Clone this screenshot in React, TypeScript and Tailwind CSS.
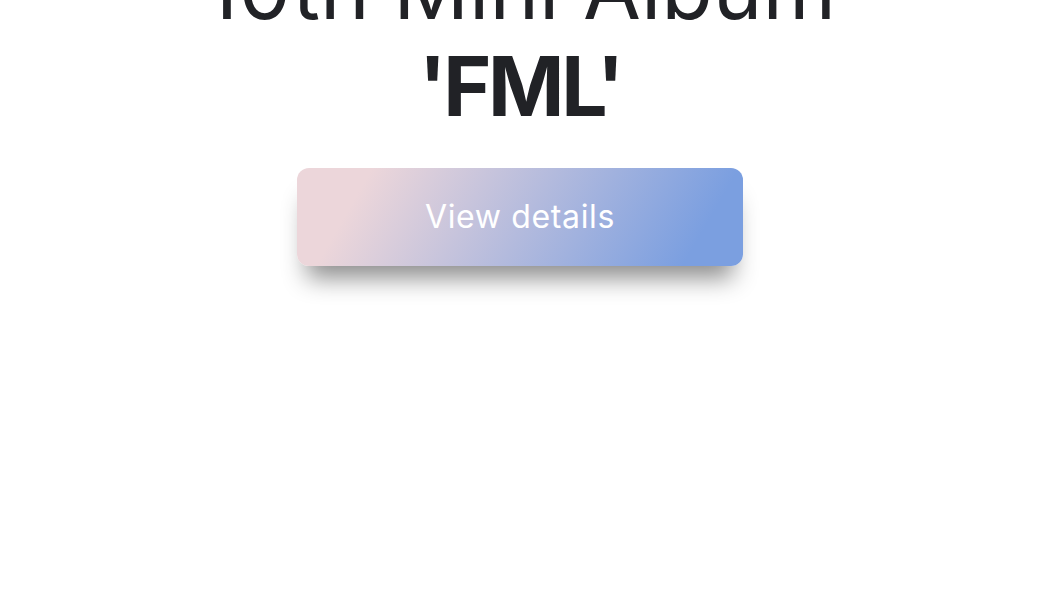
import React from 'react';

const App: React.FC = () => {
  return (
    <div className="min-h-screen bg-white overflow-hidden font-['Inter',sans-serif]">
      <section className="flex flex-col items-center -mt-[60px]">
        <h1 className="text-center text-[84px] leading-[98px] text-[#212226]">
          <span className="block font-normal">10th Mini Album</span>
          <span className="block font-bold text-[82px] tracking-[-0.04em]">'FML'</span>
        </h1>
        <button
          className="mt-[32px] w-[446px] h-[98px] rounded-xl bg-[linear-gradient(120deg,#ecd6da_15%,#7b9fe0_88%)] text-white text-[32px] tracking-[0.02em] font-normal shadow-[0_22px_24px_-10px_rgba(0,0,0,0.45)]"
        >
          View details
        </button>
      </section>
    </div>
  );
};

export default App;
